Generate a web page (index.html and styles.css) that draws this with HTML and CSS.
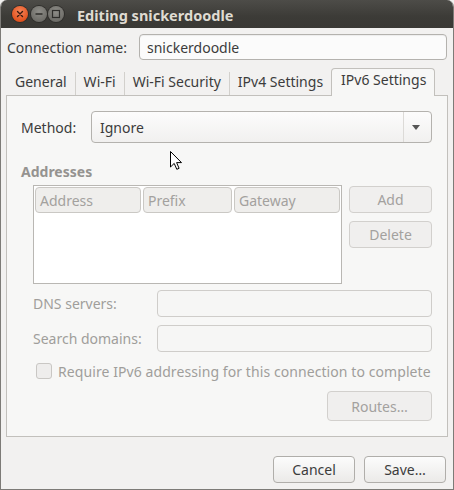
FILE: index.html
```html
<!DOCTYPE html>
<html>
<head>
<meta charset="utf-8">
<link rel="stylesheet" href="styles.css">
</head>
<body>
<div class="window">
  <div class="titlebar">
    <div class="wbtns">
      <span class="wb close"><svg width="16" height="16" viewBox="0 0 16 16"><path d="M5.5 5.5 L10.5 10.5 M10.5 5.5 L5.5 10.5" stroke="#3a1a10" stroke-width="1.4" stroke-linecap="round"/></svg></span>
      <span class="wb min"><svg width="16" height="16" viewBox="0 0 16 16"><path d="M4.5 8 H11.5" stroke="#2e2d2a" stroke-width="1.6"/></svg></span>
      <span class="wb max"><svg width="16" height="16" viewBox="0 0 16 16"><rect x="4.5" y="4.5" width="7" height="7" fill="none" stroke="#2e2d2a" stroke-width="1.2"/></svg></span>
    </div>
    <div class="title">Editing snickerdoodle</div>
  </div>
  <div class="body">
    <div class="conn-row">
      <span class="label">Connection name:</span>
      <div class="entry">snickerdoodle</div>
    </div>
    <div class="notebook">
      <div class="tabs">
        <div class="tab">General</div>
        <div class="tab">Wi-Fi</div>
        <div class="tab">Wi-Fi Security</div>
        <div class="tab">IPv4 Settings</div>
        <div class="tab active">IPv6 Settings</div>
      </div>
      <div class="panel">
        <div class="method-row">
          <span class="label">Method:</span>
          <div class="combo">
            <span class="combo-text">Ignore</span>
            <span class="combo-sep"></span>
            <span class="combo-arrow"></span>
          </div>
        </div>
        <div class="section-title">Addresses</div>
        <div class="addr-row">
          <div class="table">
            <div class="thead">
              <div class="th th-addr">Address</div>
              <div class="th th-prefix">Prefix</div>
              <div class="th th-gw">Gateway</div>
            </div>
          </div>
          <div class="side-btns">
            <div class="btn disabled">Add</div>
            <div class="btn disabled">Delete</div>
          </div>
        </div>
        <div class="field-row first">
          <span class="dlabel">DNS servers:</span>
          <div class="entry disabled"></div>
        </div>
        <div class="field-row">
          <span class="dlabel">Search domains:</span>
          <div class="entry disabled"></div>
        </div>
        <div class="check-row">
          <span class="checkbox"></span>
          <span class="dlabel">Require IPv6 addressing for this connection to complete</span>
        </div>
        <div class="routes-row">
          <div class="btn disabled routes">Routes…</div>
        </div>
      </div>
    </div>
    <div class="actions">
      <div class="btn">Cancel</div>
      <div class="btn">Save…</div>
    </div>
  </div>
  <svg class="cursor" width="13" height="20" viewBox="0 0 13 20"><path d="M0.5 0.5 L0.5 16 L4.2 12.4 L6.8 18.3 L9.1 17.3 L6.6 11.6 L11.5 11.6 Z" fill="#fff" stroke="#000" stroke-width="1" stroke-linejoin="round"/></svg>
</div>
</body>
</html>
```

FILE: styles.css
```css
* { box-sizing: border-box; }
html, body { margin: 0; padding: 0; }
body {
  font-family: "Noto Sans", "DejaVu Sans", sans-serif;
  font-size: 14px;
  color: #3c3c3c;
  background: #f2f1f0;
}
.window {
  position: relative;
  width: 454px;
  height: 490px;
  background: #f2f1f0;
  border: 1px solid #7d7b77;
  border-top: none;
  border-radius: 7px 7px 0 0;
  overflow: hidden;
  display: flex;
  flex-direction: column;
}
.titlebar {
  height: 28px;
  flex: none;
  background: linear-gradient(#4d4c48, #3c3b37 60%, #3a3935);
  display: flex;
  align-items: center;
  padding-left: 11px;
}
.wbtns { display: flex; gap: 1px; align-items: center; }
.wb {
  width: 16px; height: 16px; border-radius: 50%;
  display: block;
}
.wb svg { display: block; }
.close { background: radial-gradient(circle at 50% 35%, #f6865b, #e2531f 70%, #c2441a); box-shadow: 0 0 0 1px #2f2e2b; }
.min, .max { background: radial-gradient(circle at 50% 35%, #8e8d88, #6f6e69 70%, #5e5d59); box-shadow: 0 0 0 1px #2f2e2b; }
.wbtns .min { margin-left: 2px; }
.title {
  margin-left: 13px;
  color: #dfdbd2;
  font-weight: bold;
  font-size: 14.5px;
  margin-top: 1px;
}
.body {
  flex: 1;
  display: flex;
  flex-direction: column;
  padding: 6px 5px 0 5px;
}
.conn-row {
  display: flex;
  align-items: center;
  justify-content: space-between;
  height: 26px;
}
.conn-row .label { padding-left: 1px; }
.entry {
  height: 26px;
  border: 1px solid #b4b2ae;
  border-radius: 4px;
  background: #fbfbfb;
  padding: 0 7px;
  display: flex;
  align-items: center;
}
.conn-row .entry { width: 308px; margin-right: 1px; box-shadow: inset 0 1px 1px rgba(0,0,0,0.06); }
.notebook { margin-top: 8px; display: flex; flex-direction: column; }
.tabs {
  display: flex;
  align-items: flex-end;
  height: 27px;
  padding-left: 1px;
  position: relative;
  z-index: 1;
}
.tab {
  height: 23px;
  padding: 0 8px 4px 8px;
  border-right: 1px solid #d2d0cc;
  display: flex;
  align-items: center;
  line-height: 1;
}
.tab:nth-child(4) { border-right: none; }
.tab.active {
  height: 28px;
  margin-bottom: -1px;
  padding: 0 8px 5px 9px;
  background: #f7f7f6;
  border: 1px solid #c2c0bc;
  border-bottom: none;
  border-radius: 4px 4px 0 0;
}
.panel {
  height: 342px;
  border: 1px solid #c2c0bc;
  background: #f7f7f6;
  padding: 15px 15px 0 14px;
  display: flex;
  flex-direction: column;
}
.method-row {
  display: flex;
  align-items: center;
  justify-content: space-between;
  height: 32px;
}
.combo {
  width: 341px;
  height: 32px;
  border: 1px solid #b4b2ae;
  border-radius: 4px;
  background: linear-gradient(#fcfcfc, #f1f0ef);
  display: flex;
  align-items: center;
  padding-left: 8px;
}
.combo-text { flex: 1; }
.combo-sep { width: 1px; height: 30px; background: #dcdad7; }
.combo-arrow {
  width: 0; height: 0;
  border-left: 4px solid transparent;
  border-right: 4px solid transparent;
  border-top: 5px solid #555;
  margin: 0 11px 0 8px;
}
.section-title {
  margin-top: 20px;
  font-weight: bold;
  color: #959390;
  height: 17px;
  line-height: 17px;
}
.addr-row {
  margin-top: 5px;
  margin-left: 12px;
  display: flex;
  gap: 7px;
  align-items: flex-start;
}
.table {
  width: 310px;
  height: 99px;
  border: 1px solid #b9b7b3;
  background: #fff;
  padding: 1px 1px;
}
.thead { display: flex; gap: 2px; }
.th {
  height: 26px;
  border: 1px solid #cac8c4;
  border-radius: 4px;
  background: #efeeec;
  color: #a3a19e;
  display: flex;
  align-items: center;
  padding-left: 4px;
}
.th-addr { width: 106px; }
.th-prefix { width: 89px; }
.th-gw { width: 106px; }
.side-btns {
  display: flex;
  flex-direction: column;
  gap: 8px;
  padding-top: 1px;
}
.side-btns .btn { width: 83px; height: 27px; }
.btn {
  height: 27px;
  border: 1px solid #b0aeaa;
  border-radius: 4px;
  background: linear-gradient(#fcfcfc, #ebeae8);
  display: flex;
  align-items: center;
  justify-content: center;
  color: #3c3c3c;
}
.btn.disabled {
  background: #f0efee;
  border-color: #d2d0cd;
  color: #a3a19e;
}
.field-row {
  margin-left: 12px;
  display: flex;
  align-items: center;
  justify-content: space-between;
  height: 27px;
  margin-top: 8px;
}
.field-row.first { margin-top: 6px; }
.dlabel { color: #a09e9b; }
.entry.disabled {
  width: 275px;
  height: 27px;
  background: #f6f6f5;
  border-color: #cfcdca;
}
.check-row {
  margin-left: 15px;
  margin-top: 11px;
  display: flex;
  align-items: center;
  height: 16px;
  gap: 6px;
}
.checkbox {
  width: 16px; height: 16px;
  border: 1px solid #c9c7c4;
  border-radius: 3px;
  background: #eeedec;
  flex: none;
}
.check-row .dlabel { letter-spacing: 0.08px; }
.routes-row {
  display: flex;
  justify-content: flex-end;
  margin-top: 12px;
}
.btn.routes { width: 105px; height: 30px; }
.actions {
  display: flex;
  justify-content: flex-end;
  gap: 9px;
  margin-top: 19px;
  padding-right: 2px;
}
.actions .btn { width: 82px; height: 27px; }
.cursor {
  position: absolute;
  left: 169px;
  top: 151px;
}
```
